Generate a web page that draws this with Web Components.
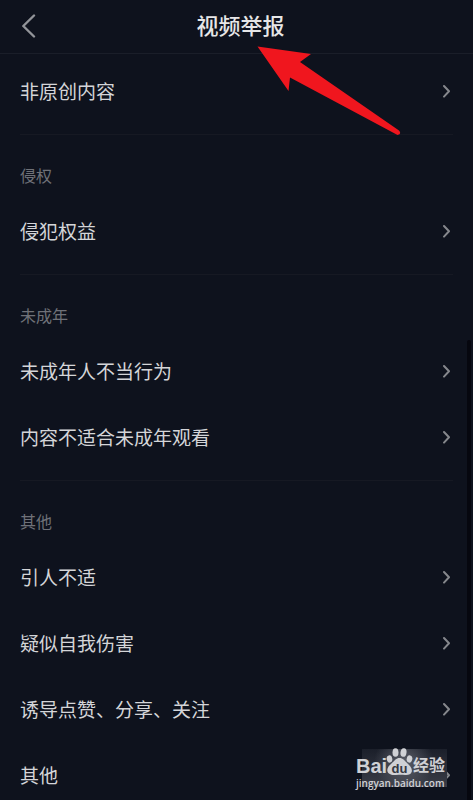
<!DOCTYPE html>
<html lang="zh-CN">
<head>
<meta charset="utf-8">
<meta name="viewport" content="width=device-width, initial-scale=1">
<title>视频举报</title>
<style>
  html, body { margin: 0; background: #0e121d; }
  body { font-family: "Noto Sans CJK SC", "Liberation Sans", sans-serif; color: #d4d5d8; }
</style>
</head>
<body>
<report-page>
  <report-header slot="header">视频举报</report-header>
  <report-section>
    <report-row>非原创内容</report-row>
  </report-section>
  <report-section heading="侵权">
    <report-row>侵犯权益</report-row>
  </report-section>
  <report-section heading="未成年">
    <report-row>未成年人不当行为</report-row>
    <report-row>内容不适合未成年观看</report-row>
  </report-section>
  <report-section heading="其他">
    <report-row>引人不适</report-row>
    <report-row>疑似自我伤害</report-row>
    <report-row>诱导点赞、分享、关注</report-row>
    <report-row>其他</report-row>
  </report-section>
  <pointer-arrow slot="overlay"></pointer-arrow>
  <site-watermark slot="overlay"></site-watermark>
</report-page>

<script>
const define = (name, html, setup) => {
  const template = document.createElement('template');
  template.innerHTML = html;
  customElements.define(name, class extends HTMLElement {
    constructor() {
      super();
      this.attachShadow({ mode: 'open' }).append(template.content.cloneNode(true));
    }
    connectedCallback() { if (setup) setup(this, this.shadowRoot); }
  });
};

define('report-page', `
  <style>
    :host { display: flex; flex-direction: column; position: relative; height: 100vh; overflow: hidden; background: #0e121d; }
    main { flex: 1; min-height: 0; overflow-y: auto; scrollbar-width: none; padding-top: 4px; }
    .thumb { position: absolute; right: 2px; top: 340px; bottom: 0; width: 4px; border-radius: 2px 2px 0 0; background: #06070f; }
  </style>
  <slot name="header"></slot>
  <main><slot></slot></main>
  <div class="thumb"></div>
  <slot name="overlay"></slot>
`);

define('report-header', `
  <style>
    :host { display: block; border-bottom: 1px solid #1a1e29; }
    header { display: grid; grid-template-columns: 64px 1fr 56px; align-items: center; padding-bottom: 5px; }
    button { border: 0; background: none; padding: 4px 0 0 20px; height: 48px; display: flex; align-items: center; color: #929499; }
    h1 { margin: 0; text-align: center; font-size: 22px; line-height: 32px; font-weight: 500; color: #e6e6e7; }
    svg { display: block; }
  </style>
  <header>
    <button type="button" aria-label="返回">
      <svg width="16" height="24" viewBox="0 0 16 24" fill="none" stroke="currentColor" stroke-width="2.4" stroke-linecap="round" stroke-linejoin="round"><path d="M14 1.5 3.3 12 14 22.5"/></svg>
    </button>
    <h1><slot></slot></h1>
  </header>
`);

define('report-section', `
  <style>
    :host { display: block; }
    h2 { margin: 0; padding: 28px 20px 11px; font-size: 16px; line-height: 24px; font-weight: 400; color: #6f7178; }
    h2[hidden] { display: none; }
    .rows { padding-bottom: 10px; }
    .line { margin: 0 20px; height: 1px; background: #161923; }
  </style>
  <section>
    <h2 hidden></h2>
    <div class="rows"><slot></slot></div>
    <div class="line"></div>
  </section>
`, (host, root) => {
  const text = host.getAttribute('heading');
  const h2 = root.querySelector('h2');
  h2.hidden = !text;
  h2.textContent = text || '';
});

define('report-row', `
  <style>
    :host { display: block; }
    button { display: flex; align-items: center; justify-content: space-between; width: 100%; height: 66px; border: 0; padding: 0 20px; background: none; font: inherit; font-size: 19px; line-height: 28px; color: inherit; text-align: left; }
    svg { display: block; color: #85878c; }
  </style>
  <button type="button">
    <span><slot></slot></span>
    <svg width="12" height="14" viewBox="0 0 12 14" fill="none" stroke="currentColor" stroke-width="2" stroke-linecap="round" stroke-linejoin="round"><path d="M3 2 8 7.300 3 12.600"/></svg>
  </button>
`);

define('pointer-arrow', `
  <style>
    :host { position: absolute; left: calc(50% + 20px); top: 46px; pointer-events: none; }
    svg { display: block; }
  </style>
  <svg width="144" height="90" viewBox="0 0 144 90" aria-hidden="true"><path fill="#f0161e" d="M.5.5 54 8 43 16 142 84.500Q145 88 140.500 89L33 31.500 31.500 45Z"/></svg>
`);

define('site-watermark', `
  <style>
    :host { position: absolute; right: 28px; bottom: 9px; width: 89px; pointer-events: none; color: #d0d1d5; font-family: "Liberation Sans", "Noto Sans CJK SC", sans-serif; }
    .back { position: absolute; inset: 1px -2px 4px 6px; background: radial-gradient(circle at 42px 14px, #5c5f69 0, #3a3d4700 30px), linear-gradient(#1b1f2a, #3a3d47); }
    .brand { position: relative; display: flex; align-items: flex-end; height: 28px; font-weight: 700; }
    .bai { font-size: 20px; line-height: 20px; width: 30px; }
    .paw { width: 27px; height: 28px; }
    .jy { font-size: 16px; line-height: 20px; }
    .url { position: relative; font-family: "Open Sans", "Noto Sans", sans-serif; font-size: 10px; line-height: 15px; font-weight: 600; }
    svg { display: block; }
    .du { font-size: 13px; fill: #353842; }
  </style>
  <div class="back"></div>
  <div class="brand">
    <span class="bai">Bai</span>
    <span class="paw"><svg width="27" height="28" viewBox="0 0 27 28" fill="currentColor"><ellipse cx="3.500" cy="11" rx="2.800" ry="3.700" transform="rotate(-12 3.500 11)"/><ellipse cx="9.500" cy="4.500" rx="3" ry="4.300"/><ellipse cx="17.500" cy="4.500" rx="3" ry="4.300" transform="rotate(8 17.500 4.500)"/><ellipse cx="23.500" cy="11" rx="2.800" ry="3.700" transform="rotate(12 23.500 11)"/><path d="M13.500 10c3.500 0 4.800 2.500 7.500 5s5.500 5.500 4.800 8.500-3.800 3.800-6.800 3.500-6-.2-9 0-7.500-.3-8.500-3.500 1.500-6 4.500-8.500S10 10 13.500 10Z"/><text class="du" x="13.500" y="25" text-anchor="middle">du</text></svg></span>
    <span class="jy">经验</span>
  </div>
  <div class="url">jingyan.baidu.com</div>
`);
</script>
</body>
</html>
